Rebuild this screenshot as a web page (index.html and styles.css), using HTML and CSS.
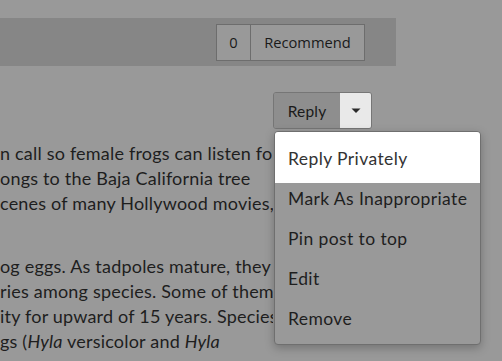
FILE: index.html
```html
<!DOCTYPE html>
<html>
<head>
<meta charset="utf-8">
<link rel="stylesheet" href="styles.css">
</head>
<body>
<div class="page">
  <div class="bar">
    <div class="rec-group">
      <span class="rec-count">0</span>
      <span class="rec-label">Recommend</span>
    </div>
  </div>
  <div class="reply-row">
    <div class="reply-group">
      <span class="reply-btn">Reply</span>
      <span class="reply-caret"><svg width="10" height="6" viewBox="0 0 10 6"><path d="M0.5 0.5 L9.5 0.5 L5 5 Z" fill="#2a2a2a"/></svg></span>
    </div>
  </div>
  <div class="body-text">
    <div class="para">
      <div class="line">n call so female frogs can listen fo</div>
      <div class="line">ongs to the Baja California tree</div>
      <div class="line">cenes of many Hollywood movies,</div>
    </div>
    <div class="para">
      <div class="line">og eggs. As tadpoles mature, they</div>
      <div class="line">ries among species. Some of them</div>
      <div class="line">ity for upward of 15 years. Species</div>
      <div class="line">gs (<i>Hyla</i> versicolor and <i>Hyla</i></div>
    </div>
  </div>
  <ul class="menu">
    <li class="menu-item active">Reply Privately</li>
    <li class="menu-item">Mark As Inappropriate</li>
    <li class="menu-item">Pin post to top</li>
    <li class="menu-item">Edit</li>
    <li class="menu-item">Remove</li>
  </ul>
</div>
</body>
</html>
```
FILE: styles.css
```css
html, body {
  margin: 0;
  padding: 0;
  background: #999999;
  width: 502px;
  height: 361px;
  overflow: hidden;
}
.page {
  position: relative;
  width: 502px;
  height: 361px;
  overflow: hidden;
  font-family: "Lato", "Open Sans", sans-serif;
  color: #1e1e1e;
}
.bar {
  margin-top: 18px;
  width: 396px;
  height: 48px;
  background: #868686;
  display: flex;
  justify-content: flex-end;
  align-items: center;
  box-sizing: border-box;
  padding-right: 31px;
}
.rec-group {
  display: flex;
  height: 37px;
  border: 1px solid #6d6d6d;
  box-sizing: border-box;
  background: #999;
  font-family: "Open Sans", sans-serif;
  font-size: 14.7px;
  color: #1a1a1a;
}
.rec-count {
  width: 33px;
  display: flex;
  align-items: center;
  justify-content: center;
  border-right: 1px solid #6d6d6d;
}
.rec-label {
  width: 113px;
  display: flex;
  align-items: center;
  justify-content: center;
}
.reply-row {
  margin-top: 26px;
  padding-left: 273px;
}
.reply-group {
  display: inline-flex;
  height: 37px;
  border: 1px solid #767676;
  border-radius: 3px;
  box-sizing: border-box;
  overflow: hidden;
  font-size: 15.5px;
  letter-spacing: 0.2px;
}
.reply-btn {
  width: 66px;
  display: flex;
  align-items: center;
  justify-content: center;
  background: #8e8e8e;
  color: #1a1a1a;
}
.reply-caret {
  width: 31px;
  display: flex;
  align-items: center;
  justify-content: center;
  background: #e9e9e9;
}
.body-text {
  margin-top: 12px;
  width: 273px;
  overflow: hidden;
  font-size: 18px;
  line-height: 25px;
  letter-spacing: 0.2px;
}
.para + .para {
  margin-top: 38px;
}
.line {
  white-space: nowrap;
  overflow: hidden;
}
.menu {
  position: absolute;
  left: 274px;
  top: 131px;
  width: 207px;
  height: 214px;
  margin: 0;
  padding: 0;
  list-style: none;
  background: #999;
  border: 1px solid #6f6f6f;
  border-radius: 4px;
  box-sizing: border-box;
  box-shadow: 0 3px 10px rgba(0,0,0,0.25);
  overflow: hidden;
  font-size: 17.5px;
  letter-spacing: 0.4px;
  color: #1e1e1e;
}
.menu-item {
  height: 40px;
  display: flex;
  align-items: center;
  padding-left: 13px;
  padding-bottom: 9px;
  box-sizing: border-box;
}
.menu-item.active {
  background: #fff;
  color: #333;
  height: 51px;
  padding-top: 1px;
  padding-bottom: 0;
}
```
